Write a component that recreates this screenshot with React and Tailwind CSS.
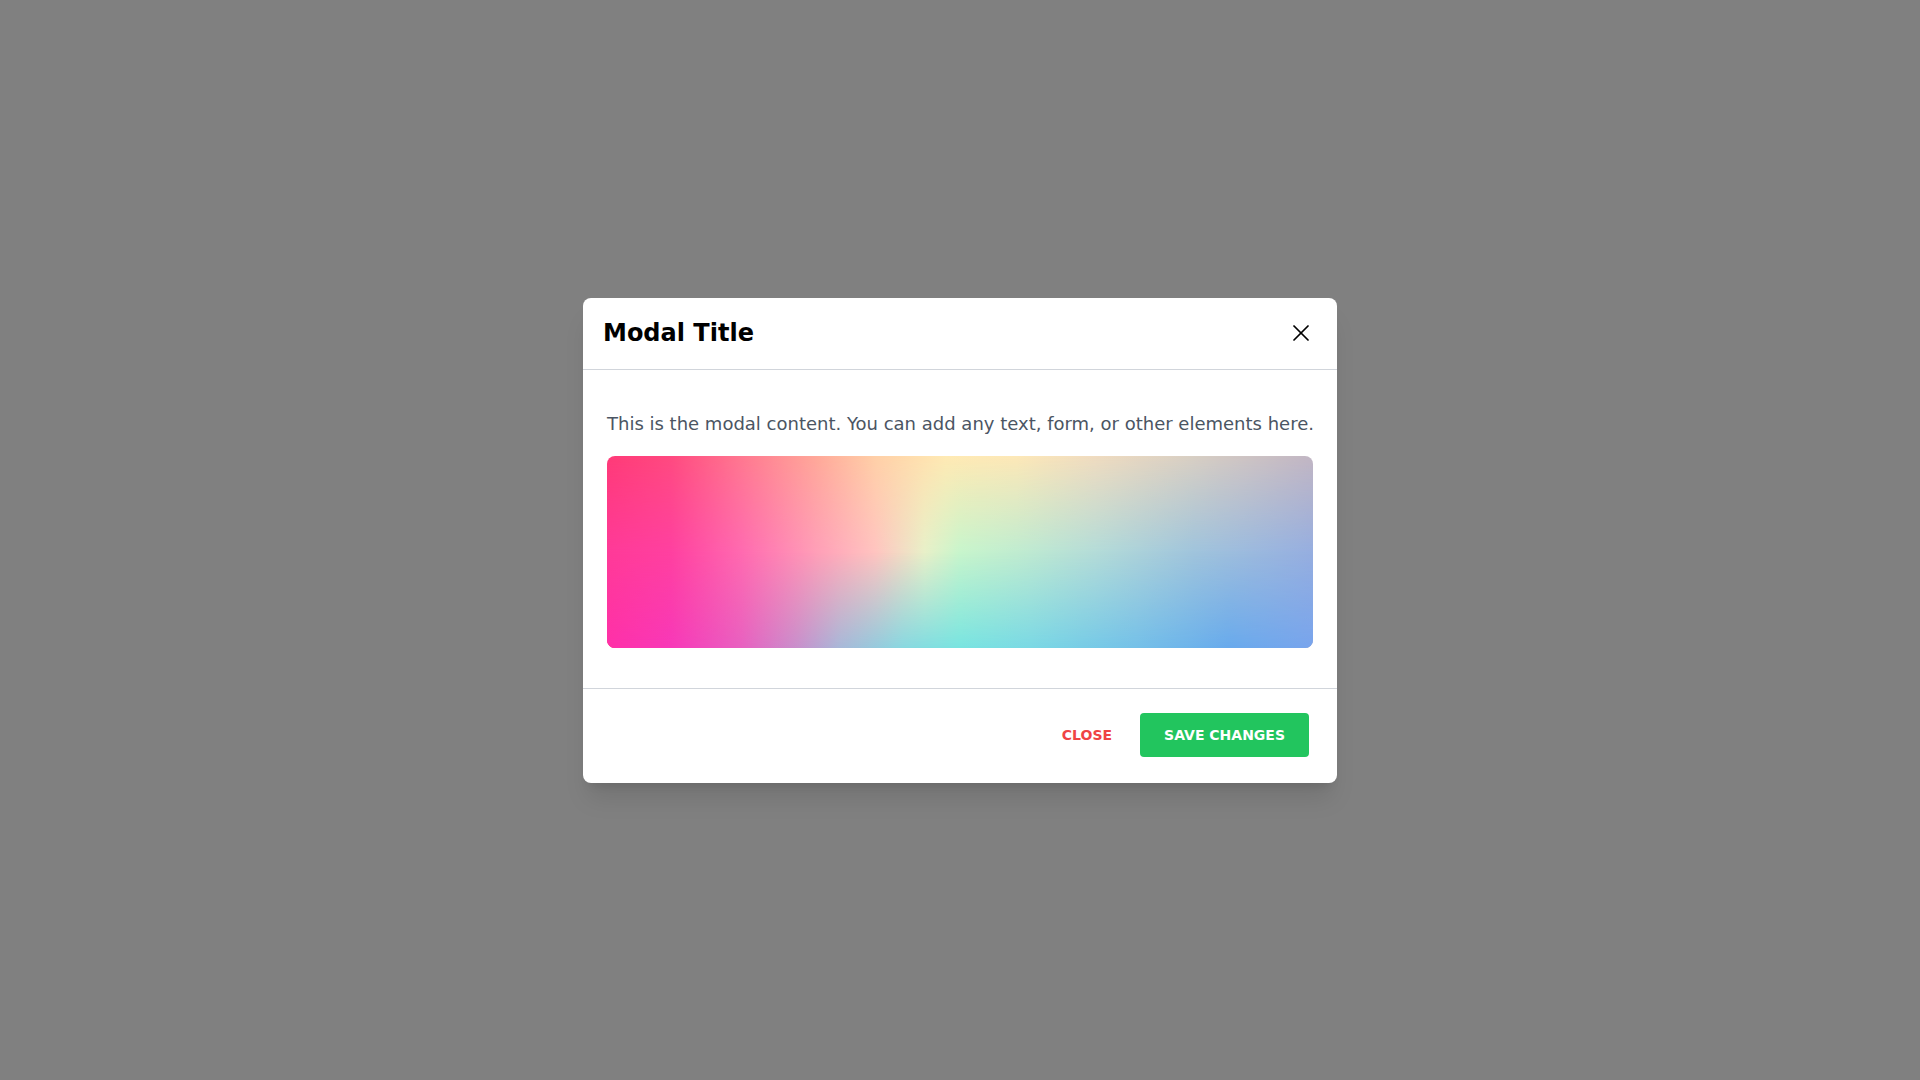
import { X } from "lucide-react";

function GradientArt() {
  // soft mesh-like gradient, built from three rows blended top to bottom
  return (
    <svg viewBox="0 0 706 192" preserveAspectRatio="none" className="block h-full w-full">
      <defs>
        <linearGradient id="rowTop" x1="0" y1="0" x2="1" y2="0">
          <stop offset="0" stopColor="#ff3a78" />
          <stop offset="0.09" stopColor="#ff4a80" />
          <stop offset="0.19" stopColor="#ff7890" />
          <stop offset="0.3" stopColor="#ffaa9a" />
          <stop offset="0.38" stopColor="#ffd0a8" />
          <stop offset="0.48" stopColor="#ffeab4" />
          <stop offset="0.58" stopColor="#fde8b8" />
          <stop offset="0.69" stopColor="#f0dcc0" />
          <stop offset="0.83" stopColor="#d8cfc4" />
          <stop offset="1" stopColor="#c2b6c4" />
        </linearGradient>
        <linearGradient id="rowMid" x1="0" y1="0" x2="1" y2="0">
          <stop offset="0" stopColor="#ff3a98" />
          <stop offset="0.09" stopColor="#ff40a0" />
          <stop offset="0.19" stopColor="#ff6ab0" />
          <stop offset="0.3" stopColor="#ffa0b8" />
          <stop offset="0.38" stopColor="#ffc4c0" />
          <stop offset="0.45" stopColor="#e8f0c8" />
          <stop offset="0.5" stopColor="#c8f5cc" />
          <stop offset="0.58" stopColor="#c0ecd0" />
          <stop offset="0.69" stopColor="#b4dcd8" />
          <stop offset="0.83" stopColor="#a0c4dc" />
          <stop offset="1" stopColor="#96aee0" />
        </linearGradient>
        <linearGradient id="rowBot" x1="0" y1="0" x2="1" y2="0">
          <stop offset="0" stopColor="#ff30a8" />
          <stop offset="0.09" stopColor="#f838b8" />
          <stop offset="0.19" stopColor="#e860c0" />
          <stop offset="0.27" stopColor="#c890cc" />
          <stop offset="0.33" stopColor="#a8b8d8" />
          <stop offset="0.42" stopColor="#88d8e0" />
          <stop offset="0.5" stopColor="#78e4e0" />
          <stop offset="0.6" stopColor="#7ad8e4" />
          <stop offset="0.75" stopColor="#74c0e8" />
          <stop offset="0.88" stopColor="#68aaec" />
          <stop offset="1" stopColor="#78a4ec" />
        </linearGradient>
        <linearGradient id="fadeMid" x1="0" y1="0" x2="0" y2="1">
          <stop offset="0" stopColor="#fff" stopOpacity="0" />
          <stop offset="0.5" stopColor="#fff" stopOpacity="1" />
          <stop offset="1" stopColor="#fff" stopOpacity="1" />
        </linearGradient>
        <linearGradient id="fadeBot" x1="0" y1="0" x2="0" y2="1">
          <stop offset="0.5" stopColor="#fff" stopOpacity="0" />
          <stop offset="1" stopColor="#fff" stopOpacity="1" />
        </linearGradient>
        <mask id="maskMid">
          <rect width="706" height="192" fill="url(#fadeMid)" />
        </mask>
        <mask id="maskBot">
          <rect width="706" height="192" fill="url(#fadeBot)" />
        </mask>
      </defs>
      <rect width="706" height="192" fill="url(#rowTop)" />
      <rect width="706" height="192" fill="url(#rowMid)" mask="url(#maskMid)" />
      <rect width="706" height="192" fill="url(#rowBot)" mask="url(#maskBot)" />
    </svg>
  );
}

export default function App() {
  return (
    <div className="flex h-screen w-full items-center justify-center bg-[#808080] font-['DejaVu_Sans',sans-serif]">
      <div className="w-[754px] rounded-lg bg-white shadow-xl">
        {/* Header */}
        <div className="flex h-[72px] items-center justify-between border-b border-[#d1d5db] px-5">
          <h2 className="text-2xl font-bold text-black">Modal Title</h2>
          <button className="p-0.5 text-black">
            <X size={28} strokeWidth={1.5} />
          </button>
        </div>

        {/* Body */}
        <div className="px-6 py-10">
          <p className="mb-[18px] whitespace-nowrap text-lg text-[#4b5563]">
            This is the modal content. You can add any text, form, or other elements here.
          </p>
          <div className="h-48 overflow-hidden rounded-lg">
            <GradientArt />
          </div>
        </div>

        {/* Footer */}
        <div className="flex items-center justify-end gap-3 border-t border-[#d1d5db] px-7 pt-6 pb-[26px]">
          <button className="px-4 py-3 text-sm font-bold uppercase text-[#ef4444]">Close</button>
          <button className="h-11 rounded bg-[#22c55e] px-6 text-sm font-bold uppercase text-white">
            Save Changes
          </button>
        </div>
      </div>
    </div>
  );
}
